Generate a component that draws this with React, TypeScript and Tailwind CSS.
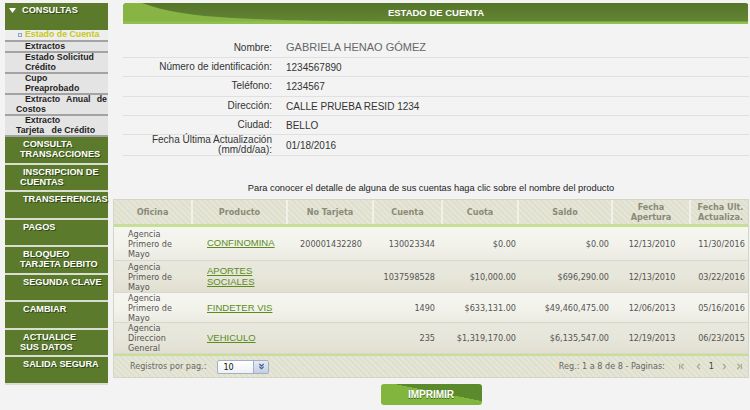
import React, { FC } from "react";
import { ChevronsDown, ChevronFirst, ChevronLeft, ChevronRight, ChevronLast } from "lucide-react";

const menu: React.ReactNode[] = [
  <>CONSULTA<br />TRANSACCIONES</>,
  <>INSCRIPCION DE<br />CUENTAS</>,
  <>TRANSFERENCIAS</>,
  <>PAGOS</>,
  <>BLOQUEO<br />TARJETA DEBITO</>,
  <>SEGUNDA CLAVE</>,
  <>CAMBIAR</>,
  <>ACTUALICE<br />SUS DATOS</>,
  <>SALIDA SEGURA</>,
];

const info = [
  { label: <>Número de identificación:</>, value: "1234567890", h: "h-[19px]" },
  { label: <>Teléfono:</>, value: "1234567", h: "h-[20px]" },
  { label: <>Dirección:</>, value: "CALLE PRUEBA RESID 1234", h: "h-[19px]" },
  { label: <>Ciudad:</>, value: "BELLO", h: "h-[19px]" },
  { label: <>Fecha Última Actualización<br />(mm/dd/aa):</>, value: "01/18/2016", h: "h-[21px]" },
];

interface Row {
  oficina: React.ReactNode;
  producto: React.ReactNode;
  tarjeta: string;
  cuenta: string;
  cuota: string;
  saldo: string;
  apertura: string;
  ult: string;
  h: string;
  bg: string;
}

const rows: Row[] = [
  {
    oficina: <>Agencia<br />Primero de<br />Mayo</>,
    producto: "CONFINOMINA",
    tarjeta: "200001432280",
    cuenta: "130023344",
    cuota: "$0.00",
    saldo: "$0.00",
    apertura: "12/13/2010",
    ult: "11/30/2016",
    h: "h-[34px]",
    bg: "bg-[linear-gradient(#f6f6f1,#f3f3ec_50%,#ecebe2)]",
  },
  {
    oficina: <>Agencia<br />Primero de<br />Mayo</>,
    producto: <>APORTES<br />SOCIALES</>,
    tarjeta: "",
    cuenta: "1037598528",
    cuota: "$10,000.00",
    saldo: "$696,290.00",
    apertura: "12/13/2010",
    ult: "03/22/2016",
    h: "h-[32px]",
    bg: "bg-[linear-gradient(#e9e8de,#e7e6da_50%,#e0dfd1)]",
  },
  {
    oficina: <>Agencia<br />Primero de<br />Mayo</>,
    producto: "FINDETER VIS",
    tarjeta: "",
    cuenta: "1490",
    cuota: "$633,131.00",
    saldo: "$49,460,475.00",
    apertura: "12/06/2013",
    ult: "05/16/2016",
    h: "h-[30px]",
    bg: "bg-[linear-gradient(#f6f6f1,#f3f3ec_50%,#ecebe2)]",
  },
  {
    oficina: <>Agencia<br />Direccion<br />General</>,
    producto: "VEHICULO",
    tarjeta: "",
    cuenta: "235",
    cuota: "$1,319,170.00",
    saldo: "$6,135,547.00",
    apertura: "12/19/2013",
    ult: "06/23/2015",
    h: "h-[31px]",
    bg: "bg-[linear-gradient(#e9e8de,#e7e6da_50%,#e0dfd1)]",
  },
];

const cols = "grid grid-cols-[79px_95px_86px_69px_76px_94px_78px_59px]";
const stripes =
  "bg-[repeating-linear-gradient(45deg,#e6e6d7_0px,#e6e6d7_2px,#dfdfcf_2px,#dfdfcf_4px)]";
const tahoma = "font-['DejaVu_Sans_Condensed','Liberation_Sans',sans-serif]";

const Sidebar: FC = () => (
  <aside className="ml-[5px] mt-[3px] flex w-[103px] flex-col font-['Liberation_Sans',Arial,sans-serif] font-bold">
    <div className="flex h-[27px] items-start bg-[#5b7a2c] pt-[2px] text-[9.2px] leading-[10px] text-white [text-shadow:1px_1px_0_#33491a]">
      <svg width="7" height="5" viewBox="0 0 7 5" className="ml-[4px] mr-[6px] mt-[3px]">
        <polygon points="0,0 7,0 3.5,5" fill="#fff" />
      </svg>
      CONSULTAS
    </div>
    <div className="bg-[#e4e4e4] text-[8.8px] leading-[9.5px] text-[#1f1f1f]">
      <div className="flex items-center border-b-2 border-[#a3a3a3] bg-[#eeeeee] pl-[13px] text-[#c6c81c]">
        <span className="mr-[3px] h-[4px] w-[4px] border border-[#8ea3c8]" />
        Estado de Cuenta
      </div>
      <div className="border-b-2 border-[#a3a3a3] pl-[20px]">Extractos</div>
      <div className="border-b-2 border-[#a3a3a3] pl-[20px]">Estado Solicitud<br />Crédito</div>
      <div className="border-b-2 border-[#a3a3a3] pl-[20px]">Cupo<br />Preaprobado</div>
      <div className="border-b-2 border-[#a3a3a3] pl-[11px] pr-[1px] indent-[9px] text-justify">
        Extracto Anual de Costos
      </div>
      <div className="border-b-2 border-[#a3a3a3] pl-[11px] indent-[9px]">
        Extracto<br />Tarjeta&nbsp;&nbsp; de Crédito
      </div>
    </div>
    {menu.map((item, i) => (
      <div
        key={i}
        className="h-[27.5px] whitespace-nowrap border-b-2 border-[#d9ded0] bg-[#5b7a2c] pl-[15px] pt-[2px] indent-[3px] text-[9.2px] leading-[10px] text-white [text-shadow:1px_1px_0_#33491a]"
      >
        {item}
      </div>
    ))}
  </aside>
);

const HeaderBar: FC = () => (
  <div className="relative ml-[10px] mt-[3px] flex h-[21px] items-center justify-center overflow-hidden rounded-t-[4px]">
    <svg className="absolute inset-0" width="625" height="21" viewBox="0 0 625 21" preserveAspectRatio="none">
      <defs>
        <linearGradient id="dk" x1="0" y1="0" x2="0" y2="1">
          <stop offset="0" stopColor="#557629" />
          <stop offset="1" stopColor="#648636" />
        </linearGradient>
      </defs>
      <rect width="625" height="21" fill="url(#dk)" />
      <path d="M0 0 H19 C40 8 70 13 110 15 C150 17 200 18 270 18.5 V21 H0 Z" fill="#87b445" />
      <rect y="18.5" width="625" height="2.5" fill="#8fc24c" />
    </svg>
    <span className="relative pb-[1px] text-[9.5px] font-bold text-white">ESTADO DE CUENTA</span>
  </div>
);

const App: FC = () => {
  return (
    <div className="flex min-h-[410px] w-[750px] bg-[#f3f3f3] font-['Liberation_Sans',Arial,sans-serif]">
      <Sidebar />
      <main className="ml-[5px] w-[636px]">
        <HeaderBar />

        <div className="ml-[10px] pt-[14px] text-[10px] text-[#333]">
          <div className="flex h-[20px] items-center border-b border-[#e0e0e0]">
            <span className="w-[149px] text-right">Nombre:</span>
            <span className="pl-[14px] text-[11px] text-[#666]">GABRIELA HENAO GÓMEZ</span>
          </div>
          {info.map((r, i) => (
            <div key={i} className={`flex ${r.h} items-center border-b border-[#e0e0e0]`}>
              <span className="w-[149px] text-right leading-[10.5px]">{r.label}</span>
              <span className="pl-[14px]">{r.value}</span>
            </div>
          ))}
        </div>

        <p className="mt-[26px] text-center text-[9.3px] leading-[12px] text-[#222]">
          Para conocer el detalle de alguna de sus cuentas haga clic sobre el nombre del producto
        </p>

        <div className={`mt-[5px] border border-[#d5d5c5] ${tahoma} text-[9px] text-[#555]`}>
          <div className={`${cols} h-[24px] ${stripes} font-bold leading-[10px] text-[#8a8a77]`}>
            {["Oficina", "Producto", "No Tarjeta", "Cuenta", "Cuota", "Saldo"].map((h) => (
              <div key={h} className="flex items-center justify-center border-r-2 border-[#f1f1e9]">
                {h}
              </div>
            ))}
            <div className="flex items-center justify-center border-r-2 border-[#f1f1e9] text-center">
              Fecha<br />Apertura
            </div>
            <div className="flex items-center justify-center text-center">
              Fecha Ult.<br />Actualiza.
            </div>
          </div>
          <div className="h-[3px] bg-[#c6de97]" />

          {rows.map((r, i) => (
            <div key={i} className={`${cols} ${r.h} ${r.bg} items-center border-b border-[#d8d7c8] leading-[10px]`}>
              <div className="pl-[14px]">{r.oficina}</div>
              <div className="pl-[14px]">
                <a className="font-['Liberation_Sans',Arial,sans-serif] text-[9.5px] leading-[10.5px] text-[#5b8c1d] underline">
                  {r.producto}
                </a>
              </div>
              <div className="text-center">{r.tarjeta}</div>
              <div className="pr-[8px] text-right">{r.cuenta}</div>
              <div className="pr-[3px] text-right">{r.cuota}</div>
              <div className="pr-[4px] text-right">{r.saldo}</div>
              <div className="text-center">{r.apertura}</div>
              <div className="pl-[2px] text-center">{r.ult}</div>
            </div>
          ))}

          <div className="h-[2px] bg-[#c6de97]" />
          <div className={`flex h-[21px] items-center ${stripes} text-[#666]`}>
            <span className="ml-[16px]">Registros por pag.:</span>
            <div className="ml-[11px] flex h-[14px] w-[52px] items-stretch overflow-hidden rounded-[2px] border border-[#a4b0c2] bg-[linear-gradient(#ffffff,#eef1f5)]">
              <span className="flex-1 pl-[5px] leading-[12px] text-[#111]">10</span>
              <span className="flex w-[15px] items-center justify-center border-l border-[#a4b0c2] bg-[linear-gradient(#e4ebf5,#c2cfe2)]">
                <ChevronsDown size={9} strokeWidth={3} color="#3d5a88" />
              </span>
            </div>
            <span className="ml-auto">Reg.: 1 a 8 de 8 - Paginas:</span>
            <div className="ml-[12px] mr-[4px] flex items-center text-[#444]">
              <ChevronFirst size={9} strokeWidth={3} color="#a7a68c" />
              <ChevronLeft size={9} strokeWidth={3} color="#a7a68c" className="ml-[8px]" />
              <span className="ml-[6px]">1</span>
              <ChevronRight size={9} strokeWidth={3} color="#a7a68c" className="ml-[6px]" />
              <ChevronLast size={9} strokeWidth={3} color="#a7a68c" className="ml-[6px]" />
            </div>
          </div>
        </div>

        <div className="mt-[6px] flex justify-center">
          <button className="h-[21px] w-[101px] rounded-[3px] bg-[linear-gradient(11deg,#82b53d_58%,#5b8a2c_58%)] text-[10px] font-bold text-white [text-shadow:0_1px_0_#3f6420]">
            IMPRIMIR
          </button>
        </div>
      </main>
    </div>
  );
};

export default App;
